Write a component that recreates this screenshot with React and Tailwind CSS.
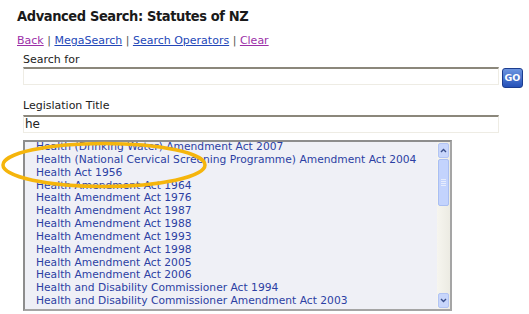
const items = [
  "Health (Drinking Water) Amendment Act 2007",
  "Health (National Cervical Screening Programme) Amendment Act 2004",
  "Health Act 1956",
  "Health Amendment Act 1964",
  "Health Amendment Act 1976",
  "Health Amendment Act 1987",
  "Health Amendment Act 1988",
  "Health Amendment Act 1993",
  "Health Amendment Act 1998",
  "Health Amendment Act 2005",
  "Health Amendment Act 2006",
  "Health and Disability Commissioner Act 1994",
  "Health and Disability Commissioner Amendment Act 2003",
];

function App() {
  return (
    <div className="relative w-[529px] h-[314px] overflow-hidden bg-white pl-[17px] pt-[6px] font-['DejaVu_Sans',sans-serif] text-[#222]">
      {/* Title */}
      <h1 className="text-[14.5px] font-bold leading-[20px] tracking-[-0.4px] text-[#1a1a1a] font-['DejaVu_Sans_Condensed','DejaVu_Sans',sans-serif] font-stretch-condensed">
        Advanced Search: Statutes of NZ
      </h1>

      {/* Links */}
      <div className="mt-[7px] text-[11px] leading-[16px] text-[#555]">
        <a href="#" className="underline text-[#9b30a8]">Back</a>
        {" | "}
        <a href="#" className="underline text-[#2347b8]">MegaSearch</a>
        {" | "}
        <a href="#" className="underline text-[#2347b8]">Search Operators</a>
        {" | "}
        <a href="#" className="underline text-[#9b30a8]">Clear</a>
      </div>

      <div className="pl-[6px]">
        {/* Search for */}
        <div className="mt-[4px] text-[11px] leading-[14px] text-[#222]">Search for</div>
        <div className="flex items-start gap-[3px]">
          <div className="w-[476px] h-[18px] border border-[#eeece4] border-t-[#8b877b] border-t-2 bg-white"></div>
          <button className="mt-[1px] w-[21px] h-[20px] rounded-[3px] border border-[#1c3d8f] bg-gradient-to-b from-[#6d95e0] to-[#2550b8] text-white text-[9.5px] font-bold leading-none flex items-center justify-center">
            GO
          </button>
        </div>

        {/* Legislation Title */}
        <div className="mt-[11px] text-[11px] leading-[14px] text-[#222]">Legislation Title</div>
        <div className="mt-[2px] w-[476px] h-[18px] border border-[#eeece4] border-t-[#8b877b] border-t-2 bg-white text-[12px] leading-[14px] pl-[1px]">
          he
        </div>

        {/* Listbox */}
        <div className="mt-[7px] w-[429px] h-[171px] border-2 border-[#8d8d8d] border-r-[#a5a5a5] border-b-[#a5a5a5] bg-[#eff0f6] flex overflow-hidden">
          <div className="flex-1 overflow-hidden pl-[11px]">
            <div className="-mt-[1px]">
              {items.map((item) => (
                <div key={item} className="h-[12.85px] text-[10.7px] leading-[12.85px] text-[#2c3fa3] whitespace-nowrap">
                  {item}
                </div>
              ))}
            </div>
          </div>
          {/* Scrollbar */}
          <div className="w-[13px] flex flex-col bg-gradient-to-r from-[#f6f5ef] to-[#ecebe3]">
            <div className="h-[15px] mx-[1px] mt-[1px] rounded-[2px] bg-[#c8d6fb] border border-[#b2c4f4] flex items-center justify-center">
              <svg width="7" height="5" viewBox="0 0 7 5"><path d="M1 4 L3.5 1.5 L6 4" fill="none" stroke="#3a4f8a" strokeWidth="1.4" /></svg>
            </div>
            <div className="h-[47px] mx-[1px] mt-[1px] rounded-[2px] bg-[#c3d3fd] border border-[#a9bef2] flex flex-col items-center justify-center gap-[1px]">
              <div className="w-[5px] h-px bg-[#e6ecfd]"></div>
              <div className="w-[5px] h-px bg-[#e6ecfd]"></div>
              <div className="w-[5px] h-px bg-[#e6ecfd]"></div>
              <div className="w-[5px] h-px bg-[#e6ecfd]"></div>
            </div>
            <div className="flex-1"></div>
            <div className="h-[15px] mx-[1px] mb-[1px] rounded-[2px] bg-[#c8d6fb] border border-[#b2c4f4] flex items-center justify-center">
              <svg width="7" height="5" viewBox="0 0 7 5"><path d="M1 1 L3.5 3.5 L6 1" fill="none" stroke="#3a4f8a" strokeWidth="1.4" /></svg>
            </div>
          </div>
        </div>
      </div>

      {/* Annotation ellipse */}
      <svg className="absolute left-0 top-0 pointer-events-none" width="529" height="314">
        <ellipse cx="104" cy="165" rx="101" ry="21.5" fill="none" stroke="#f5b50c" strokeWidth="3.5" />
      </svg>
    </div>
  );
}

export default App;
